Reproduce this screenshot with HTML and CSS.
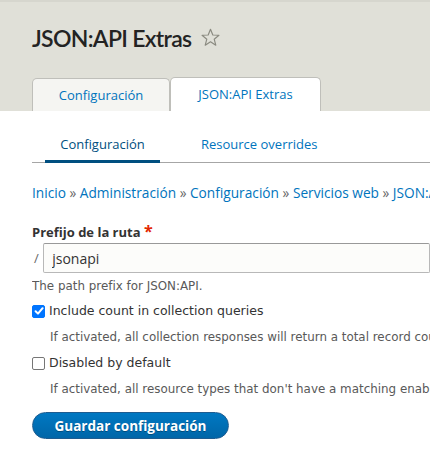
FILE: index.html
```html
<!DOCTYPE html>
<html lang="es">
<head>
<meta charset="utf-8">
<title>JSON:API Extras</title>
<link rel="stylesheet" href="styles.css">
</head>
<body>
<header class="page-header">
  <h1 class="page-title">JSON:API Extras
    <svg class="star" width="19" height="19" viewBox="0 0 18 18"><path d="M9 1.2 L11.2 6.6 L17 6.9 L12.5 10.6 L14 16.3 L9 13.1 L4 16.3 L5.5 10.6 L1 6.9 L6.8 6.6 Z" fill="none" stroke="#8a8a80" stroke-width="1.1" stroke-linejoin="round"/></svg>
  </h1>
  <nav class="tabs-primary">
    <a class="ptab">Configuración</a>
    <a class="ptab active">JSON:API Extras</a>
  </nav>
</header>
<main class="content">
  <nav class="tabs-secondary">
    <a class="stab active">Configuración</a>
    <a class="stab">Resource overrides</a>
  </nav>
  <div class="breadcrumb"><a>Inicio</a> » <a>Administración</a> » <a>Configuración</a> » <a>Servicios web</a> » <a>JSON:API Extras</a></div>
  <form class="form">
    <div class="field">
      <label class="label">Prefijo de la ruta <span class="req">*</span></label>
      <div class="input-row"><span class="prefix">/</span><input class="text" type="text" value="jsonapi"></div>
      <div class="desc">The path prefix for JSON:API.</div>
    </div>
    <div class="check first">
      <label class="check-label"><span class="box checked"><svg width="10" height="10" viewBox="0 0 10 10"><path d="M1.6 5.2 L4 7.6 L8.6 2.2" fill="none" stroke="#fff" stroke-width="2" stroke-linecap="round" stroke-linejoin="round"/></svg></span>Include count in collection queries</label>
      <div class="desc indent">If activated, all collection responses will return a total record count for the provided query.</div>
    </div>
    <div class="check">
      <label class="check-label"><span class="box"></span>Disabled by default</label>
      <div class="desc indent">If activated, all resource types that don't have a matching enabled resource config will be disabled.</div>
    </div>
    <button class="btn" type="button">Guardar configuración</button>
  </form>
</main>
</body>
</html>
```
FILE: styles.css
```css
html, body { margin: 0; padding: 0; overflow: hidden; }
body {
  background: #fff;
  font-family: "DejaVu Sans", Verdana, sans-serif;
  color: #222330;
  width: 430px;
}
a { color: #0074bd; text-decoration: none; }

.page-header {
  background: #e0e0d8;
  border-top: 2px solid #d6d6ce;
  padding: 0 0 0 32px;
  height: 109px;
  display: flex;
  flex-direction: column;
}
.page-title {
  margin: 18px 0 0 0;
  font-family: Lato, "Open Sans", sans-serif;
  font-weight: 600;
  font-size: 23px;
  letter-spacing: -0.7px;
  line-height: 36px;
  color: #232323;
  display: flex;
  align-items: center;
  gap: 10px;
  white-space: nowrap;
}
.star { margin-top: -2px; }
.tabs-primary {
  margin-top: auto;
  display: flex;
  align-items: flex-end;
}
.ptab {
  font-family: "Open Sans", "Noto Sans", sans-serif;
  font-size: 13px;
  box-sizing: border-box;
  height: 33px;
  line-height: 32px;
  text-align: center;
  background: #f5f5f2;
  border: 1px solid #bfbfba;
  border-bottom: none;
  border-radius: 5px 5px 0 0;
  width: 138px;
}
.ptab.active {
  background: #fff;
  height: 34px;
  line-height: 33px;
  width: 151px;
}

.content { padding: 0 0 0 32px; }
.tabs-secondary {
  display: flex;
  border-bottom: 1px solid #a6a6a6;
  height: 51px;
  align-items: flex-end;
  white-space: nowrap;
}
.stab {
  font-family: "Open Sans", "Noto Sans", sans-serif;
  font-size: 13px;
  padding: 0 0 4px 0;
  box-sizing: border-box;
  text-align: center;
  border-bottom: 3px solid transparent;
  margin-bottom: -1px;
  height: 30px;
  line-height: 22px;
}
.stab.active { border-bottom-color: #004f80; width: 115px; margin-left: 13px; color: #004f80; }
.stab:nth-child(2) { margin-left: 41px; }

.breadcrumb {
  font-family: "Open Sans", "Noto Sans", sans-serif;
  font-size: 13.7px;
  color: #666;
  white-space: nowrap;
  margin-top: 20px;
  line-height: 20px;
  overflow: hidden;
}
.form { margin-top: 19px; }
.label {
  display: block;
  font-family: "Open Sans", "Noto Sans", sans-serif;
  font-weight: 700;
  font-size: 13px;
  line-height: 18px;
  color: #333;
}
.req { color: #e32700; font-size: 16px; }
.input-row { display: flex; align-items: center; margin-top: 2px; }
.prefix { font-family: "Open Sans", sans-serif; font-size: 13px; color: #666; width: 10px; padding-left: 2px; }
.text {
  font-family: "Open Sans", "Noto Sans", sans-serif;
  font-size: 14px;
  color: #333;
  box-sizing: border-box;
  height: 30px;
  width: 420px;
  padding: 0 8px;
  background: #fcfcfa;
  border: 1px solid #b8b8b8;
  border-top-color: #999;
  border-radius: 2px;
  outline: none;
}
.desc {
  font-size: 11.9px;
  color: #595959;
  white-space: nowrap;
  line-height: 14px;
  margin-top: 6px;
  overflow: hidden;
}
.desc.indent { margin-left: 18px; margin-top: 10px; }
.check { margin-top: 10px; }
.check.first { margin-top: 9px; }
.check-label {
  display: flex;
  align-items: center;
  font-size: 12.5px;
  color: #333;
  line-height: 18px;
  white-space: nowrap;
}
.box {
  box-sizing: border-box;
  width: 13px;
  height: 13px;
  border: 1px solid #767676;
  border-radius: 2px;
  margin-right: 4px;
  display: inline-flex;
  align-items: center;
  justify-content: center;
  background: #fff;
}
.box.checked { background: #0075ff; border-color: #0075ff; }
.btn {
  margin-top: 16px;
  font-family: "Open Sans", "Noto Sans", sans-serif;
  font-weight: 700;
  font-size: 13.5px;
  color: #fff;
  background: linear-gradient(#0078c2, #0066a8);
  border: 1px solid #1e5c90;
  border-radius: 20px;
  width: 197px;
  height: 27px;
  padding: 0;
  text-shadow: 0 1px 0 rgba(0,0,0,0.3);
}
```
